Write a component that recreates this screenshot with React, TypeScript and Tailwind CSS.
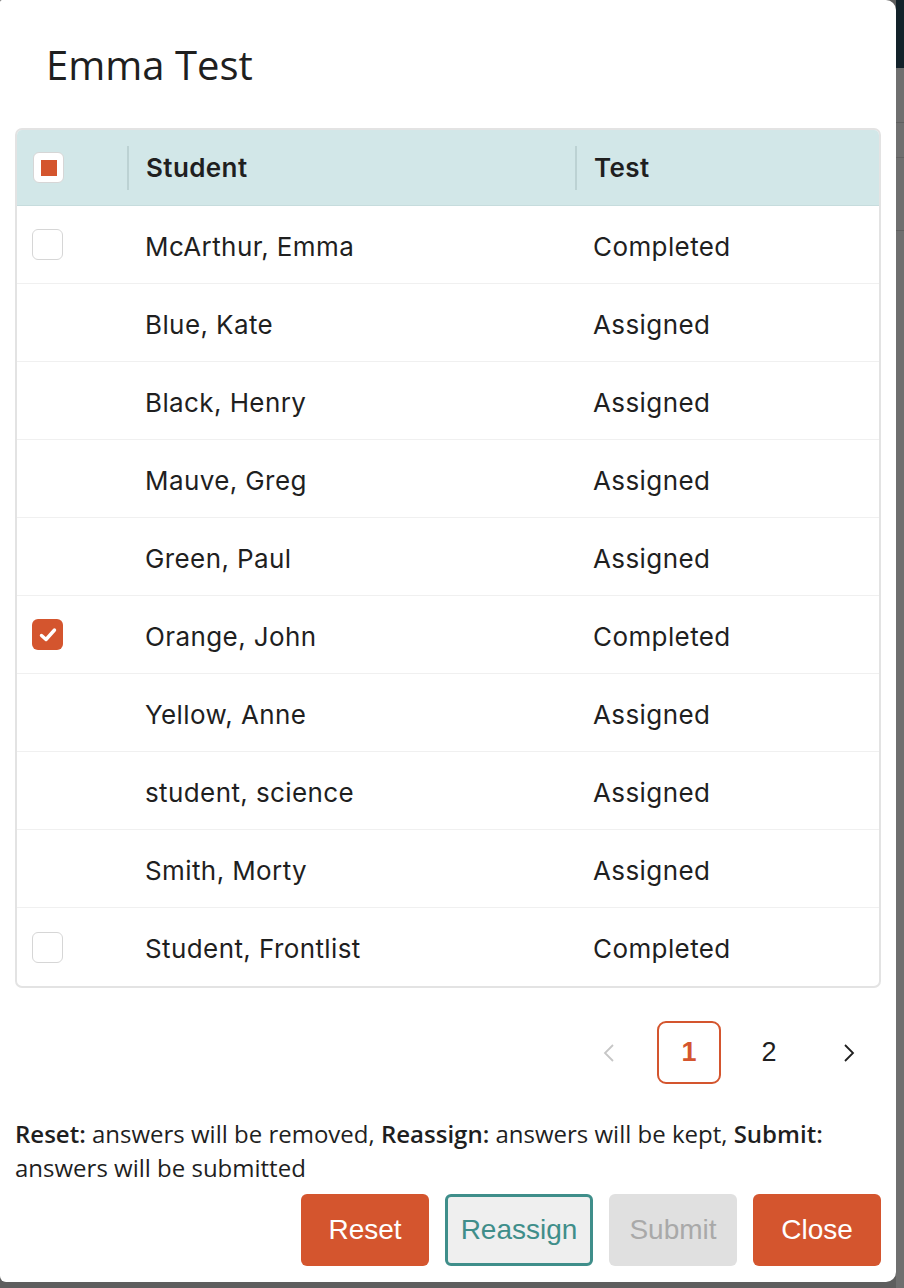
const rows = [
  { name: 'McArthur, Emma', status: 'Completed', box: 'empty' },
  { name: 'Blue, Kate', status: 'Assigned', box: 'none' },
  { name: 'Black, Henry', status: 'Assigned', box: 'none' },
  { name: 'Mauve, Greg', status: 'Assigned', box: 'none' },
  { name: 'Green, Paul', status: 'Assigned', box: 'none' },
  { name: 'Orange, John', status: 'Completed', box: 'checked' },
  { name: 'Yellow, Anne', status: 'Assigned', box: 'none' },
  { name: 'student, science', status: 'Assigned', box: 'none' },
  { name: 'Smith, Morty', status: 'Assigned', box: 'none' },
  { name: 'Student, Frontlist', status: 'Completed', box: 'empty' },
];

function Checkbox({ state }: { state: string }) {
  if (state === 'none') return null;
  if (state === 'checked') {
    return (
      <div className="w-[31px] h-[31px] rounded-[6px] bg-[#d4552e] flex items-center justify-center">
        <svg width="22" height="22" viewBox="0 0 22 22" fill="none">
          <polyline points="4.5,11.5 9,15.5 17.5,6" stroke="white" strokeWidth="3.4" strokeLinecap="round" strokeLinejoin="round" />
        </svg>
      </div>
    );
  }
  if (state === 'partial') {
    return (
      <div className="w-[31px] h-[31px] rounded-[6px] bg-white border-[1.5px] border-[#d6d6d6] flex items-center justify-center">
        <div className="w-[16px] h-[16px] bg-[#d4552e]" />
      </div>
    );
  }
  return <div className="w-[31px] h-[31px] rounded-[6px] bg-white border-[1.5px] border-[#d6d6d6]" />;
}

export default function App() {
  return (
    <div className="w-[904px] h-[1288px] bg-[#5e5e5e] flex overflow-hidden">
      <div className="w-[896px] h-[1282px] shrink-0 bg-white rounded-tl-[2px] rounded-bl-[6px] rounded-r-[10px] px-[15px] flex flex-col">
        <h1 className="h-[128px] flex items-center pl-[31px] pt-[2px] text-[40px] font-medium text-[#1f1f1f] [font-family:'Open_Sans',sans-serif]">
          Emma Test
        </h1>

        <div className="border-2 border-[#e3e3e3] rounded-[7px] overflow-hidden [font-family:Inter,sans-serif] text-[26px] tracking-[0.4px] text-[#1f1f1f]">
          <div className="grid grid-cols-[110px_448px_1fr] h-[76px] bg-[#d2e7e8] border-b border-[#c6dcdd] items-center font-semibold">
            <div className="pl-[16px] flex items-center">
              <Checkbox state="partial" />
            </div>
            <div className="border-l-2 border-[#bcd2d3] h-[44px] flex items-center pl-[17px]">Student</div>
            <div className="border-l-2 border-[#bcd2d3] h-[44px] flex items-center pl-[17px]">Test</div>
          </div>
          {rows.map((r, i) => (
            <div
              key={r.name}
              className={`grid grid-cols-[110px_448px_1fr] h-[78px] items-center ${i < rows.length - 1 ? 'border-b border-[#f0f0f0]' : ''}`}
            >
              <div className="pl-[15px] flex items-center">
                <Checkbox state={r.box} />
              </div>
              <div className="pl-[18px] pt-[3px]">{r.name}</div>
              <div className="pl-[18px] pt-[3px]">{r.status}</div>
            </div>
          ))}
        </div>

        <div className="mt-[33px] flex justify-end gap-[16px] [font-family:'Liberation_Sans',Arial,sans-serif] text-[27px]">
          <div className="w-[64px] h-[63px] flex items-center justify-center">
            <svg width="16" height="22" viewBox="0 0 16 22" fill="none">
              <polyline points="12,3 4,11 12,19" stroke="#c6c6c6" strokeWidth="1.8" />
            </svg>
          </div>
          <div className="w-[64px] h-[63px] flex items-center justify-center border-2 border-[#d4552e] rounded-[9px] text-[#d4552e] font-bold">
            1
          </div>
          <div className="w-[64px] h-[63px] flex items-center justify-center text-[#1f1f1f]">2</div>
          <div className="w-[64px] h-[63px] flex items-center justify-center">
            <svg width="16" height="22" viewBox="0 0 16 22" fill="none">
              <polyline points="4,3 12,11 4,19" stroke="#1f1f1f" strokeWidth="1.8" />
            </svg>
          </div>
        </div>

        <p className="mt-[33px] text-[24px] leading-[34px] text-[#1f1f1f] [font-family:'Open_Sans',sans-serif]">
          <b className="font-semibold">Reset:</b> answers will be removed, <b className="font-semibold">Reassign:</b> answers will be kept,{' '}
          <b className="font-semibold">Submit:</b> answers will be submitted
        </p>

        <div className="mt-[9px] flex justify-end gap-[16px] [font-family:'Liberation_Sans',Arial,sans-serif] text-[28px]">
          <button className="h-[72px] w-[128px] rounded-[6px] bg-[#d4552e] text-white">Reset</button>
          <button className="h-[72px] w-[148px] rounded-[6px] bg-[#efefef] border-[3px] border-[#3f8e8a] text-[#3f8e8a]">Reassign</button>
          <button className="h-[72px] w-[128px] rounded-[6px] bg-[#e0e0e0] text-[#a9a9a9]">Submit</button>
          <button className="h-[72px] w-[128px] rounded-[6px] bg-[#d4552e] text-white">Close</button>
        </div>
      </div>

      <div className="flex-1 flex flex-col">
        <div className="h-[68px] bg-[#13222a]" />
        <div className="flex-1 bg-[#6f6f6f] flex flex-col">
          <div className="h-[54px]" />
          <div className="h-px bg-[#5f5f5f]" />
          <div className="h-[34px]" />
          <div className="h-px bg-[#626262]" />
          <div className="h-[72px]" />
          <div className="h-px bg-[#5f5f5f]" />
        </div>
      </div>
    </div>
  );
}
